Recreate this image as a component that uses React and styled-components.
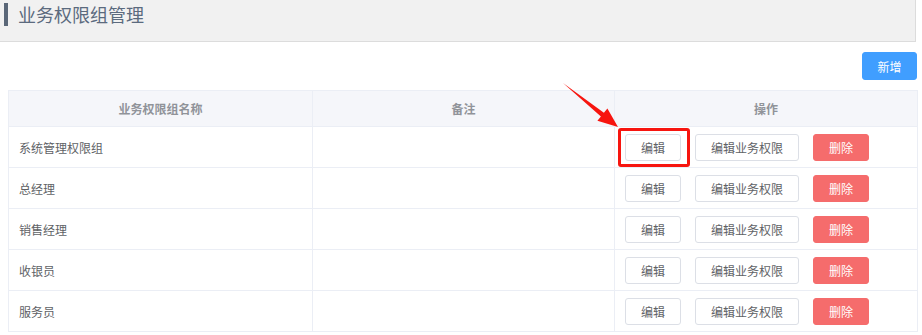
import React from 'react';
import styled, { createGlobalStyle } from 'styled-components';

const GlobalStyle = createGlobalStyle`
  body {
    margin: 0;
    background: #fff;
    font-family: "Noto Sans CJK SC", "Noto Sans", sans-serif;
  }
`;

const Page = styled.div`
  position: relative;
  width: 922px;
`;

const TitleBar = styled.div`
  width: 916px;
  height: 42px;
  background: #f1f1f1;
  border-right: 1px solid #dcdcdc;
  border-bottom: 1px solid #dcdcdc;
  display: flex;
  align-items: flex-start;
  padding-top: 3px;
  box-sizing: border-box;
`;

const Mark = styled.span`
  width: 4px;
  height: 23px;
  margin-left: 4px;
  background: #5a6778;
`;

const Title = styled.h1`
  margin: 0 0 0 10px;
  font-size: 18px;
  font-weight: normal;
  line-height: 23px;
  color: #5b6a7e;
`;

const Content = styled.div`
  padding: 10px 5px 0 8px;
  display: flex;
  flex-direction: column;
`;

const Toolbar = styled.div`
  display: flex;
  justify-content: flex-end;
  margin-bottom: 10px;
`;

const Button = styled.button`
  font-family: inherit;
  font-size: 12px;
  height: ${p => (p.$small ? 27 : 28)}px;
  padding: 0;
  width: ${p => p.$w}px;
  border-radius: 3px;
  cursor: pointer;
  border: 1px solid ${p => (p.$kind === 'primary' ? '#409eff' : p.$kind === 'danger' ? '#f56c6c' : '#dcdfe6')};
  background: ${p => (p.$kind === 'primary' ? '#409eff' : p.$kind === 'danger' ? '#f56c6c' : '#fff')};
  color: ${p => (p.$kind ? '#fff' : '#606266')};
  box-sizing: border-box;
`;

const Table = styled.table`
  width: 909px;
  border-collapse: collapse;
  table-layout: fixed;
  border: 1px solid #ebeef5;
`;

const Th = styled.th`
  height: 35px;
  background: #f5f6fa;
  color: #909399;
  font-size: 12px;
  font-weight: bold;
  text-align: center;
  border: 1px solid #ebeef5;
  padding: 0;
`;

const Td = styled.td`
  height: 40px;
  padding: 0 0 0 10px;
  font-size: 12px;
  color: #606266;
  border: 1px solid #ebeef5;
  position: relative;
`;

const Actions = styled.div`
  display: flex;
  gap: 14px;
  align-items: center;
`;

const Highlight = styled.span`
  position: relative;
  display: inline-flex;
  &::after {
    content: '';
    position: absolute;
    top: -6px;
    bottom: -6px;
    left: -7px;
    right: -9px;
    border: 3px solid #f7150f;
    border-radius: 3px;
    pointer-events: none;
  }
`;

const Arrow = styled.svg`
  position: absolute;
  left: 555px;
  top: 78px;
  width: 70px;
  height: 55px;
  pointer-events: none;
`;

const rows = ['系统管理权限组', '总经理', '销售经理', '收银员', '服务员'];

export default function App() {
  return (
    <Page>
      <GlobalStyle />
      <TitleBar>
        <Mark />
        <Title>业务权限组管理</Title>
      </TitleBar>
      <Content>
        <Toolbar>
          <Button $kind="primary" $w={55}>新增</Button>
        </Toolbar>
        <Table>
          <colgroup>
            <col style={{ width: 304 }} />
            <col style={{ width: 302 }} />
            <col style={{ width: 303 }} />
          </colgroup>
          <thead>
            <tr>
              <Th>业务权限组名称</Th>
              <Th>备注</Th>
              <Th>操作</Th>
            </tr>
          </thead>
          <tbody>
            {rows.map((name, i) => {
              const edit = <Button $small $w={56}>编辑</Button>;
              return (
                <tr key={name}>
                  <Td>{name}</Td>
                  <Td />
                  <Td>
                    <Actions>
                      {i === 0 ? <Highlight>{edit}</Highlight> : edit}
                      <Button $small $w={104}>编辑业务权限</Button>
                      <Button $small $kind="danger" $w={56}>删除</Button>
                    </Actions>
                  </Td>
                </tr>
              );
            })}
          </tbody>
        </Table>
      </Content>
      <Arrow viewBox="555 78 70 55">
        <polygon
          points="563,83 603.9,112.7 607.4,108.4 618,127 597.4,120.8 600.9,116.5"
          fill="#f7150f"
        />
      </Arrow>
    </Page>
  );
}
